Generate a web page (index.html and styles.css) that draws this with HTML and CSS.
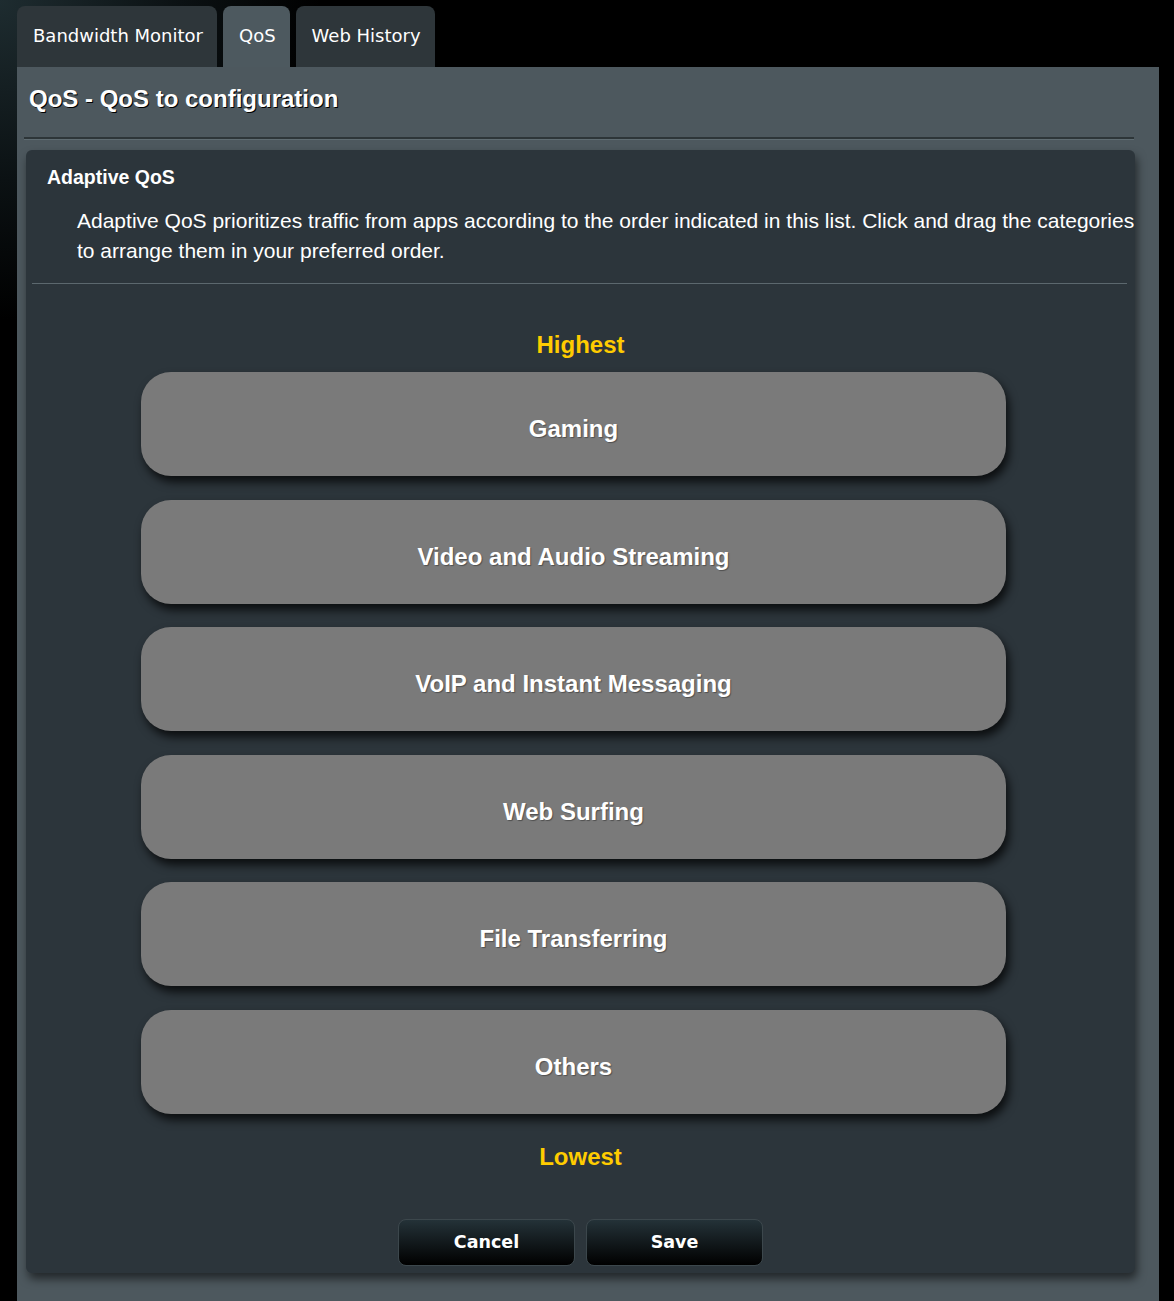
FILE: index.html
```html
<!DOCTYPE html>
<html lang="en">
<head>
    <meta charset="utf-8">
    <title>QoS - QoS to configuration</title>
    <link rel="stylesheet" href="styles.css">
</head>
<body>
    <div class="tabs">
        <div class="tab">Bandwidth Monitor</div>
        <div class="tab active">QoS</div>
        <div class="tab">Web History</div>
    </div>
    <div class="panel">
        <div class="panel-title">QoS - QoS to configuration</div>
        <div class="groove"></div>
        <div class="card">
            <div class="card-head">Adaptive QoS</div>
            <p class="desc">Adaptive QoS prioritizes traffic from apps according to the order indicated in this list. Click and drag the categories to arrange them in your preferred order.</p>
            <div class="line"></div>
            <div class="level">Highest</div>
            <ul class="prio-list">
                <li>Gaming</li>
                <li>Video and Audio Streaming</li>
                <li>VoIP and Instant Messaging</li>
                <li>Web Surfing</li>
                <li>File Transferring</li>
                <li>Others</li>
            </ul>
            <div class="level low">Lowest</div>
            <div class="actions">
                <button type="button">Cancel</button>
                <button type="button">Save</button>
            </div>
        </div>
    </div>
</body>
</html>
```

FILE: styles.css
```css
body {
    margin: 0;
    padding: 0;
    background: radial-gradient(circle at 0 0, #1e2c30 0, #0b1113 180px, #000 320px) #000;
    font-family: 'Liberation Sans', Arial, sans-serif;
    color: #fff;
}
.tabs {
    display: flex;
    gap: 6px;
    padding: 6px 0 0 17px;
}
.tab {
    height: 61px;
    line-height: 60px;
    padding: 0 14px 0 16px;
    background: #2e363a;
    border-radius: 8px 8px 0 0;
    font-family: 'DejaVu Sans', Verdana, sans-serif;
    font-size: 18px;
}
.tab.active {
    background: #4d595f;
}
.panel {
    margin-left: 17px;
    width: 1142px;
    background: #4d585e;
    padding-bottom: 40px;
}
.panel-title {
    padding: 19px 12px 0;
    height: 51px;
    font-size: 24px;
    font-weight: bold;
    line-height: 26px;
    text-shadow: 1px 1px 0 #000;
}
.groove {
    margin-left: 7px;
    width: 1110px;
    height: 1px;
    border-top: 2px solid #2d3538;
    background: #5f6c72;
}
.card {
    margin: 10px 0 0 9px;
    width: 1109px;
    background: #2c353b;
    border-radius: 6px;
    box-shadow: 2px 6px 10px rgba(0, 0, 0, 0.55);
    padding: 14px 0 7px;
}
.card-head {
    padding-left: 21px;
    font-size: 19.5px;
    font-weight: bold;
    line-height: 26px;
}
.desc {
    margin: 16px 0 0 51px;
    width: 1064px;
    font-size: 21px;
    line-height: 30px;
}
.line {
    margin: 17px 0 0 6px;
    width: 1095px;
    height: 1px;
    background: #5c686e;
}
.level {
    margin-top: 48px;
    text-align: center;
    color: #ffcc00;
    font-size: 24px;
    font-weight: bold;
    line-height: 26px;
}
.level.low {
    margin-top: 30px;
}
.prio-list {
    list-style: none;
    margin: 14px 0 0 115px;
    padding: 0;
    width: 865px;
    display: flex;
    flex-direction: column;
    gap: 23.5px;
}
.prio-list li {
    height: 104px;
    line-height: 113px;
    overflow: hidden;
    background: #7a7a7a;
    border-radius: 30px;
    text-align: center;
    font-size: 24px;
    font-weight: bold;
    text-shadow: 1px 1px 1px rgba(0, 0, 0, 0.35);
    box-shadow: 3px 6px 10px rgba(0, 0, 0, 0.75);
}
.actions {
    display: flex;
    justify-content: center;
    gap: 11px;
    margin-top: 49px;
}
button {
    width: 177px;
    height: 47px;
    border: 1px solid #3c474c;
    border-radius: 8px;
    background: linear-gradient(#243238, #000);
    color: #fff;
    font-family: 'DejaVu Sans', Verdana, sans-serif;
    font-size: 17.5px;
    font-weight: bold;
    cursor: pointer;
}
```
